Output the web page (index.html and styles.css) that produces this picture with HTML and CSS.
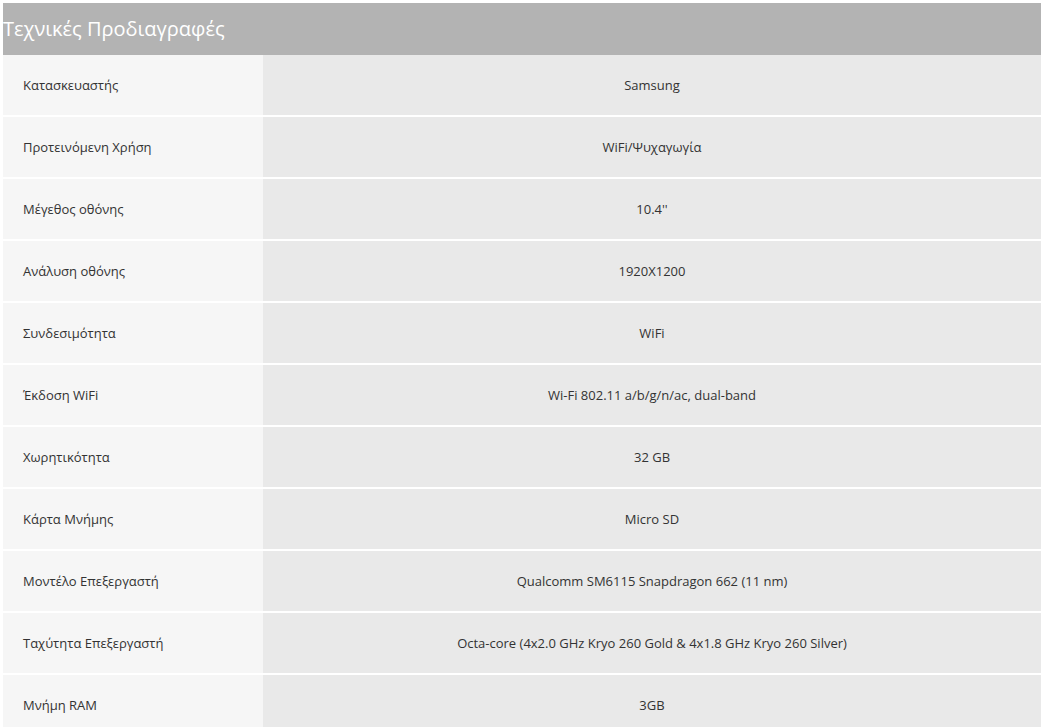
FILE: index.html
```html
<!DOCTYPE html>
<html lang="el">
<head>
<meta charset="utf-8">
<title>Τεχνικές Προδιαγραφές</title>
<link rel="stylesheet" href="styles.css">
</head>
<body>
<section class="specs">
  <h2 class="specs-title">Τεχνικές Προδιαγραφές</h2>
  <div class="specs-list">
    <div class="spec-row"><div class="spec-label">Κατασκευαστής</div><div class="spec-value">Samsung</div></div>
    <div class="spec-row"><div class="spec-label">Προτεινόμενη Χρήση</div><div class="spec-value">WiFi/Ψυχαγωγία</div></div>
    <div class="spec-row"><div class="spec-label">Μέγεθος οθόνης</div><div class="spec-value">10.4''</div></div>
    <div class="spec-row"><div class="spec-label">Ανάλυση οθόνης</div><div class="spec-value">1920X1200</div></div>
    <div class="spec-row"><div class="spec-label">Συνδεσιμότητα</div><div class="spec-value">WiFi</div></div>
    <div class="spec-row"><div class="spec-label">Έκδοση WiFi</div><div class="spec-value">Wi-Fi 802.11 a/b/g/n/ac, dual-band</div></div>
    <div class="spec-row"><div class="spec-label">Χωρητικότητα</div><div class="spec-value">32 GB</div></div>
    <div class="spec-row"><div class="spec-label">Κάρτα Μνήμης</div><div class="spec-value">Micro SD</div></div>
    <div class="spec-row"><div class="spec-label">Μοντέλο Επεξεργαστή</div><div class="spec-value">Qualcomm SM6115 Snapdragon 662 (11 nm)</div></div>
    <div class="spec-row"><div class="spec-label">Ταχύτητα Επεξεργαστή</div><div class="spec-value">Octa-core (4x2.0 GHz Kryo 260 Gold &amp; 4x1.8 GHz Kryo 260 Silver)</div></div>
    <div class="spec-row"><div class="spec-label">Μνήμη RAM</div><div class="spec-value">3GB</div></div>
  </div>
</section>
</body>
</html>
```

FILE: styles.css
```css
html, body {
  margin: 0;
  padding: 0;
  background: #ffffff;
  overflow: hidden;
}

body {
  font-family: "Open Sans", "Noto Sans", sans-serif;
  color: #333333;
  padding: 3px 0 0 3px;
}

.specs {
  width: 1038px;
}

.specs-title {
  margin: 0;
  height: 52px;
  line-height: 52px;
  background: #b3b3b3;
  color: #ffffff;
  font-size: 20px;
  font-weight: 400;
  padding: 0;
}

.specs-list {
  display: flex;
  flex-direction: column;
  gap: 2px;
}

.spec-row {
  display: grid;
  grid-template-columns: 260px 1fr;
  height: 60px;
  font-size: 13px;
}

.spec-label {
  background: #f6f6f6;
  padding-left: 20px;
  display: flex;
  align-items: center;
}

.spec-value {
  background: #e9e9e9;
  display: flex;
  align-items: center;
  justify-content: center;
  text-align: center;
}
```
